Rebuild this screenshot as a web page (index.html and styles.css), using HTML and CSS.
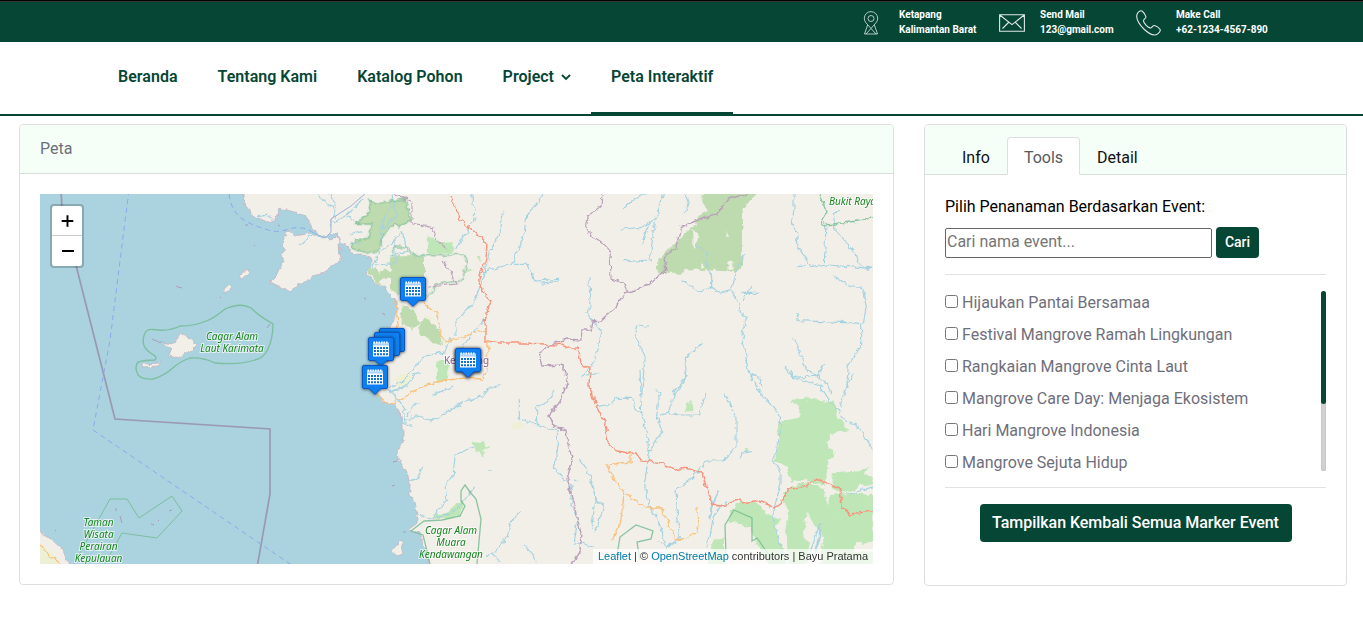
FILE: index.html
```html
<!DOCTYPE html>
<html lang="id">
<head>
<meta charset="utf-8">
<title>Peta Interaktif</title>
<link rel="stylesheet" href="styles.css">
</head>
<body>
<div class="topbar">
  <div class="contact contact-place">
    <svg class="contact-icon" width="16" height="24" viewBox="0 0 16 24"><circle cx="8" cy="7.5" r="3"/><path d="M8 17.500 3 11.800a6.700 6.700 0 1 1 10 0L8 17.500l5 5.500M4.600 14 1.500 23h13l-3.100-9M3 23l5-5.500"/></svg>
    <div>Ketapang<br>Kalimantan Barat</div>
  </div>
  <div class="contact contact-mail">
    <svg class="contact-icon" width="26" height="18" viewBox="0 0 26 18"><path d="M.6.8h24.800v16.400H.6zM.8 1l12.200 9.600L25.200 1M3.500 14.500l6-6M22.500 14.500l-6-6"/></svg>
    <div>Send Mail<br>123@gmail.com</div>
  </div>
  <div class="contact contact-call">
    <svg class="contact-icon" width="26" height="26" viewBox="0 0 26 26"><path d="M2.500 3.200C4 1 6 .2 7.300 1.200c2 1.600 3 3.600 3.600 5.400.5 1.700-2.700 2.700-2.500 4.300.5 2.600 4 6.200 6.700 7 1.800.5 2.300-2.600 4.300-2.400 2 .5 4.400 2 5.600 3.700.9 1.500-.5 3.300-2.300 4.700-3 2.300-8.300.3-13.300-4.400C4.200 14.300.2 7.500 2.500 3.200z"/></svg>
    <div>Make Call<br>+62-1234-4567-890</div>
  </div>
</div>
<nav class="nav">
  <a>Beranda</a>
  <a>Tentang Kami</a>
  <a>Katalog Pohon</a>
  <a>Project <svg class="chevron" width="10" height="7" viewBox="0 0 10 7"><path d="m1 1 4 4 4-4"/></svg></a>
  <a class="active">Peta Interaktif</a>
</nav>
<main class="main">
  <section class="card map-card">
    <div class="card-header">Peta</div>
    <div class="map">
      <svg class="map-tiles" width="833" height="370" viewBox="40 194 833 370">
        <defs>
          <filter id="rough" filterUnits="userSpaceOnUse" x="30" y="184" width="853" height="390" color-interpolation-filters="sRGB">
            <feTurbulence type="fractalNoise" baseFrequency="0.17" numOctaves="2" seed="4"/>
            <feDisplacementMap in="SourceGraphic" scale="6" xChannelSelector="R" yChannelSelector="G"/>
          </filter>
          <filter id="shadow" x="-30%" y="-30%" width="160%" height="160%"><feDropShadow dx="0" dy="0.500" stdDeviation="1.500" flood-color="#000" flood-opacity=".65"/></filter>
          <g id="pin">
            <path d="M2 .5h22a1.500 1.500 0 0 1 1.500 1.500v20a1.500 1.500 0 0 1-1.500 1.500h-5L13 29.300l-6-5.800H2A1.500 1.500 0 0 1 .5 22V2A1.500 1.500 0 0 1 2 .5z" fill="#0c7ff0" stroke="#0a55c0"/>
          </g>
          <g id="calendar-pin">
            <use href="#pin"/>
            <path d="M5 5.500h16v3.500H5z" fill="#a9d0fa"/>
            <path d="M5.500 5.500h15" stroke="#fff" stroke-width="2" stroke-dasharray="1.500 1"/>
            <path d="M5 8.500h16v11H5z" fill="#fff"/>
            <path d="M6 11h14M6 14h14M6 17.200h14" stroke="#0c6fd8" stroke-width="1.900" stroke-dasharray="2 1"/>
          </g>
        </defs>
        <rect x="40" y="194" width="833" height="370" fill="#aad3df"/>
        <g filter="url(#rough)">
          <g class="land">
            <path d="M243 190v6l2 9 5 8 7 5 11 4 7-2 4-12 23 6 6 4 4 10 5 7 8 3 7-5h6l2 10 7 2 2 7 14 4 9 2v7l-6 7 7 8 4 5h8l3 7 5 5 3 5 1 10-7 16-3 17-5 20-9 20 4 9 6 8 12 2 5 9 3 10v19l-5 8 1 10 8 12 3 11v12l5 7 2 10v11l-9 7 12 3 4 14 4 10 2 12h448V190z"/>
            <path d="m288 231 7 5 16-3 9 3 10 3 8-2 3 23-19 13-12 5-13 8-7 5-10-3-10-6 7-7 5-12 2-23z"/>
            <path d="m182 333 8 5 6 7-3 5-8 2-5 6-11-2 2-7-8-7 10 2zM142 364l19-1-3 3-16 1zM240 275l7-6 2 3-5 7-5-1zM222 293l4-5 5-4 2 3-7 6z"/>
            <path d="M36 529l9 7 8 4 9 8 7 18H36zM391 552l10-13 3 15-6 2z"/>
          </g>
          <g class="wood" transform="translate(230 185) scale(.33333)">
            <path d="m415 45 30 10 80-14 18 66-35 20-15-10-35 35-15 50-40 0-40-15 10-20 45-8 5-42-45 2 45-45z"/>
            <path d="M480 214h102v120h-70l-32-20v-35l-28 5 0-25 28-5zM515 360l40 15 10 45-20 12-30-10zM590 400l40 42 6 40-68-32v-35z"/>
            <path d="m408 255 30-8 20 30-15 25-15-30z"/>
          </g>
          <g class="wood" transform="translate(540 185) scale(.33333)">
            <path d="m482 27 170-12-46 65v165l-18 15-145-7-20 10-70 0 2-42 55-50 45-40 20-35 28-20-15-20z"/>
            <path d="m460 135 15 15-10 45-5-10zM560 135l7 22-8-2zM565 230l12 0 0 25-12-4zM485 235l10 15-12-2z" class="hole"/>
          </g>
          <g class="forest" transform="translate(230 185) scale(.33333)">
            <path d="m590 150 50 25 32-5-5 35-72 5zM620 530l35-5v60l-34 8zM742 208l12 10-5 12zM712 250l18 5-18 8z"/>
          </g>
          <g class="forest" transform="translate(590 370) scale(.33333)">
            <path d="M600 90L650 85L735 95L740 140L775 180L720 192L712 235L735 245L712 275L708 350L640 330L603 335L590 290L555 270L570 205L560 180L580 150L625 148L630 110Z"/>
            <path d="M418 425L450 395L505 400L530 430L570 450L555 475L585 545L600 600L540 600L510 540L480 475L430 455L417 460Z"/>
            <path d="M350 580L370 508L402 508L402 640L330 640Z"/>
            <path d="M580 365L640 335L700 355L715 410L740 440L800 430L850 395V515L795 520V545L850 545V600H690L700 500L650 430L640 500L660 520L640 600L600 600L585 480L600 420L578 400Z"/>
            <path d="M728 310L795 305L835 292L822 315L850 320V340L800 350L780 365L728 362Z"/>
            <path d="M718 372L780 370L850 375V395L800 432L740 440L714 410Z"/>
            <path d="M285 98l22-2 0 32-20-5zM458 235l20 0-5 14z"/>
          </g>
          <g class="forest" transform="translate(300 370) scale(.33333)">
            <path d="M400 430l40 3 30-35 22-5-10 45-80 12zM515 212l35 5 18 20-40 10zM528 240l30 5-8 12z"/>
          </g>
          <path class="scrub" d="M393 380l8-7 10 2-4 12-9 1zM512 423l10 0 3 5-12 1zM424 312l12 10-9-2zM40 543l12 9 8 12H40z"/>
          <g class="river" transform="translate(230 185) scale(.33333)">
            <path d="M75 108l10-14 25-3 20 12M265 27l25 30 20 10 10 35M300 27l20 45-20 50M310 115l40-25 50-45M210 180l35-30M350 95l40 20M358 150l40-10M365 175l30 0M725 27l10 75-60 90M820 80l-12 75-30 45-15 70-30 80-55 60 0 40M940 27l-50 70-10 60-35 80-95 25M845 238l50 0 20 50 75-5M485 27l15 65-45 40 0 55-30 65M495 45l-35 55-10 70M455 200l65-60 10 60-50 10M435 240l60-5 0-80M660 460l-15 40-65 15-55 70-45 25M770 395l-45 55-45 55M480 620l60-20"/>
          </g>
          <g class="river" transform="translate(540 185) scale(.33333)">
            <path d="M248 72l35-30 37-15M370 27l-20 70-45 30-60 5M345 95l-15 130-80 5M325 120l-20 55M435 27l10 25-10 35M0 295l50-5M147 275l3 90-10 20 45 55-20 90-40 45M140 570l35-5M285 440l5-20 38 3M285 440l30 80-10 110M488 472l-55 50 8 50-40 50M425 288l50 30 40-10 25 16 35-8 20 35 8 40 18 5-15 50 20 120 30 10 10 30M470 185l30 15 0 50 15 25 0 35M615 208l-25 50-15 55M635 300l-25 45M605 325h50M762 27v45l-8 40 15 25 5 50 40 55M858 115l-5 120M810 248l50-8 70 5 60 5M770 244h30M900 80l-20 5 5 50 60 70 15 35 40 12M880 272l40 25 50 15 10 45-10 60M770 385l5 22 190 8 0 65-40 60-5 70M762 460l35 90 60 40 15 35M735 548l25 30 75-8 20-35"/>
          </g>
          <g class="river" transform="translate(300 370) scale(.33333)">
            <path d="M250 55l30 15 30 45 5 45M275 65l50-25 20-30 20-5M315 150l45-12 35 15 50-30 55-30 50-18 15-20 40-10M320 140l15-30 20-10M310 160l30 10M400 75l60-28M658 85l0 65 50 12 60 20 5 50-10 65 50 50 0 60 20 40-10 70 60 15M765 60l-20 35-35 15v50M520 230l-55 25-5 60-25 30 5 45-45 55M368 288l-15 35-25 10M350 430l35 18 65-15 45-45 30-38M662 425l-30 30-10 45-40 50-20 10M580 555l25 20M675 525l25 30 5 25M838 270l35 50 15 70-15 90M565 300l12 5M820 330l12 2"/>
          </g>
          <g class="river" transform="translate(590 370) scale(.33333)">
            <path d="M150 0l5 130 15 60 8 60-15 90 15 70 35 60 10 50M290 0l-5 30-35 50-15 50M20 110l30-5 30-20 45 0 10 30 20 15M200 60l10 5-10 70 15 50-40 65M350 65l-25 70-60 0-30-5-25 5M403 68l35 75 0 90-40 40-50 0-40 50M475 0l30 60 60 70 8 40-15 80-10 15 25 45 0 30-25 90 10 50 20 70 10 30M600 0l10 25 80 20 30 50 30 30 5 20 45 20 50 75M790 5l-25 65-15 40M308 322l-50 40 5 80 5 60-40 30M410 390l-40 50-10 60-10 30M690 460l-20 60-25 60M850 350l-70 22M450 265l5-15 30-5M0 330l20 60 20 20-25 80M205 515l30 15 40-25"/>
          </g>
          <path class="inlet" d="M309 231l8 4 7 3 5-1M709 520l5-20 5-10M814 555l6-20 0-8"/>
          <g class="reserve">
            <g transform="translate(230 185) scale(.33333)"><path d="M415 45l30 10 80-14 18 66-35 20-15-10-35 35-15 50-40 0-40-15 10-20 45-8 5-42-45 2 45-45zM485 210l10-28 35 5 20 25 85 0 65-5 12 20-15 60-75 10-30 40"/></g>
            <path d="M819 194l7 18-5 11 5 2 40-5 8-5"/>
          </g>
          <g class="border">
            <path d="M394 194l18 8 0 21 21 5 4 12 10 11M443 260l14 24-29 3M602 194l-1 12-13 10-2 16 17 11 7 8 1 28 12 4 4 9"/>
            <path d="M750 194l-22 5-10 14-20 7-17 7-5 20-12 12 2 10-17 15-23 9-11 15-15 13-7 1-2 8-9 0-1 10-14-1-14 5-15 10 4 12 21-1 4 18-8 20-10 12 5 12 12 3 2 15 5 15-6 18 14 55-1 19-11 17-22 7" stroke-width="1.400"/>
          </g>
        </g>
        <g filter="url(#rough)">
          <g class="trunk">
            <path d="M450 194l10 25 27 24-1 15-8 25 12 18-5 20 0 20 15 2 25 0 20 1 8 2 7-2 8 4 10 0 3 16 9 4-1 18 7 20 9 17 3 20 9 8 20 3 4 6 22 3 12 7 11-2 16 5 10 32 10 1 18-7 3 5 16-3 10 4 5 3 7-5 7-14 15-1 13-9 24 10 2 18 8 7 23-3 14-12"/>
          </g>
          <g class="road">
            <path d="M396 300l2 25-10 15M424 303l13 10 4 24 5 5 38-12M488 340l-1 30-4 9-20-1-33 5-30 16-12 5-12-10M630 452v10l-8 1-16 2 12 20 6 9-3 25-9 22M626 494l20 14 15 0 15 32 13-2 9-10-1-22M40 545l10 10 12 10"/>
          </g>
        </g>
        <g class="reserve">
          <path d="M145 333Q147 329 153 329.500Q168 332 180 326Q195 326 206 321Q213 319 225 309Q241 302 251 308Q259 316 273 324Q273 338 268 349Q264 358 255 360Q240 365 215 363Q203 357 190 358Q181 361 174 367Q164 376 153 379Q143 380 138 375Q134 367 138 362Q145 360 155 360Q158 357 152 354Q139 346 145 333Z"/>
          <path d="M76 560l34-61h17l12 19 33-22 10 15-25 27-35-5-19 34" class="reserve-thin"/>
          <path d="M477 564l4-45-5-20-6-7-5-7-4 6 0 10 4 5-5 10-18 4-18 1-13 10 12 4 3 12 4 17M617 555l3-18 16-12 17 6-2 8-14 3 3 18M726 555l-1-30 9-15 18 8 0 23 5-3 12 17"/>
        </g>
        <path class="maritime" d="M61 190l1 20 53 209 155 10v65l-13 74"/>
        <path class="ferry" d="M129 190l-19 150-17 90 200 136M229 194c3 26 22 30 36 35 22 8 25-8 46 2"/>
        <path class="ferry strait" d="M310 231l8 4 7 3 6-6 0-13 20-13 23-20"/>
        <g class="rocks"><path d="M245 225h3M278 225l2 1M254 245l1 1M176 286l2 1 4 1M220 297l1 1M203 359l1 1M270 324l-3 4M152 339l2 1 3 1 3 2 2-2M364 298l2 1M382 313l3 2M393 462l4-1M392 486l3-1M403 532l3 0M116 508l0 3M120 516l2 7M151 524l3 1M158 520l1 1M169 511l3-1M55 530l1 1"/></g>
        <g class="park-label">
          <text x="232" y="340">Cagar Alam</text><text x="232" y="352">Laut Karimata</text>
          <text x="98.500" y="526">Taman</text><text x="98.500" y="538">Wisata</text><text x="98.500" y="550">Perairan</text><text x="98.500" y="562">Kepulauan</text>
          <text x="451" y="534">Cagar Alam</text><text x="451" y="546">Muara</text><text x="451" y="558">Kendawangan</text>
          <text class="label-start" x="829" y="205">Bukit Raya</text>
        </g>
        <text class="city-label" x="466.500" y="363.500">Ketapang</text>
        <g filter="url(#shadow)"><use href="#calendar-pin" x="400" y="277"/></g>
        <g filter="url(#shadow)"><use href="#pin" x="379" y="328"/></g>
        <g filter="url(#shadow)"><use href="#pin" x="374" y="332"/></g>
        <g filter="url(#shadow)"><use href="#calendar-pin" x="368" y="337"/></g>
        <g filter="url(#shadow)"><use href="#calendar-pin" x="362" y="365"/></g>
        <g filter="url(#shadow)"><g filter="url(#shadow)"><use href="#calendar-pin" x="455" y="348"/></g></g>
      </svg>
      <div class="zoom">
        <svg width="30" height="30" viewBox="0 0 30 30"><path d="M9.500 15.500h12M15.500 9.500v12"/></svg>
        <svg width="30" height="30" viewBox="0 0 30 30"><path d="M10 15h12"/></svg>
      </div>
      <div class="attribution"><a>Leaflet</a> | © <a>OpenStreetMap</a> contributors | Bayu Pratama</div>
    </div>
  </section>
  <section class="card tools-card">
    <div class="tabs"><span class="tab">Info</span><span class="tab tab-active">Tools</span><span class="tab">Detail</span></div>
    <div class="tools">
      <label class="tools-label">Pilih Penanaman Berdasarkan Event:</label>
      <div class="search"><input class="search-input" type="text" placeholder="Cari nama event..."><button class="btn btn-small">Cari</button></div>
      <div class="events">
        <div class="event-list">
          <label><input type="checkbox">Hijaukan Pantai Bersamaa</label>
          <label><input type="checkbox">Festival Mangrove Ramah Lingkungan</label>
          <label><input type="checkbox">Rangkaian Mangrove Cinta Laut</label>
          <label><input type="checkbox">Mangrove Care Day: Menjaga Ekosistem</label>
          <label><input type="checkbox">Hari Mangrove Indonesia</label>
          <label><input type="checkbox">Mangrove Sejuta Hidup</label>
        </div>
        <div class="scrollbar"><div class="scroll-thumb"></div></div>
      </div>
      <button class="btn btn-reset">Tampilkan Kembali Semua Marker Event</button>
    </div>
  </section>
</main>
</body>
</html>
```
FILE: styles.css
```css
* { box-sizing: border-box; }
body { margin: 0; height: 619px; overflow: hidden; background: #fff; color: #6f6f7b; font: 16px/24px Roboto, sans-serif; }
.topbar { display: flex; height: 42px; padding: 6px 0 0 863px; border-top: 1px solid #000; background: #064635; color: #fff; font-size: 10px; line-height: 15px; font-weight: 700; box-shadow: inset 0 1px #33332f; }
.contact { display: flex; gap: 20px; white-space: nowrap; }
.contact-place { width: 136px; }
.contact-mail { width: 136px; gap: 15px; }
.contact-call { gap: 15px; }
.contact-icon { flex: none; fill: none; stroke: #dfe9e5; stroke-width: 1.100; }
.contact-place .contact-icon { margin-top: 4px; stroke-width: .8; }
.contact-mail .contact-icon { margin-top: 7px; }
.contact-call .contact-icon { margin-top: 3px; }
.nav { display: flex; height: 74px; padding-left: 98px; border-bottom: 2px solid #064635; }
.nav a { height: 73px; padding: 23px 20px 0; color: #064635; font-weight: 600; font-size: 16px; letter-spacing: .02px; white-space: nowrap; }
.nav .active { border-bottom: 3px solid #064635; }
.chevron { margin-left: 3px; vertical-align: 1px; fill: none; stroke: #064635; stroke-width: 1.800; }
.main { display: flex; gap: 30px; align-items: flex-start; padding: 8px 0 0 19px; }
.card { border: 1px solid #dfdfdf; border-radius: 4px; background: #fff; overflow: hidden; }
.map-card { width: 875px; height: 461px; }
.card-header { height: 49px; padding: 12px 20px; border-bottom: 1px solid #d6dfd8; background: #f5fff8; }
.map { position: relative; width: 833px; height: 370px; margin: 20px; overflow: hidden; }
.map-tiles { display: block; }
.land { fill: #f2efe9; stroke: #c6aebd; stroke-width: .7; }
.wood { fill: #bedbb0; }
.wood .hole { fill: #f2efe9; }
.forest { fill: #bfe6b6; }
.scrub { fill: #eef0d5; }
.river { fill: none; stroke: #a5d2e0; stroke-width: 3.500; stroke-linejoin: round; }
.inlet { fill: none; stroke: #aad3df; stroke-width: 2.400; }
.reserve { fill: none; stroke: #71b98d; stroke-width: 1.300; opacity: .8; }
.reserve g { stroke-width: 3.500; }
.reserve-thin { stroke-width: 1; }
.border { fill: none; stroke: #b9a0b9; stroke-width: 1.100; }
.trunk { fill: none; stroke: #f6947d; stroke-width: 1.400; }
.road { fill: none; stroke: #f8c27c; stroke-width: 1.300; }
.maritime { fill: none; stroke: #9b98b3; stroke-width: 1.700; }
.ferry { fill: none; stroke: #8ba8ec; stroke-width: 1; stroke-dasharray: 5 4; }
.strait { stroke-dasharray: none; stroke: #a2aed8; }
.rocks { fill: none; stroke: #aa9bb8; stroke-width: 1; }
.park-label { fill: #17851f; stroke: rgba(255,255,255,.65); stroke-width: 2; paint-order: stroke; font: italic 10px "Noto Sans", sans-serif; text-anchor: middle; }
.label-start { text-anchor: start; }
.city-label { fill: #85648c; stroke: rgba(255,255,255,.7); stroke-width: 2; paint-order: stroke; font: 10px "Noto Sans", sans-serif; text-anchor: middle; }
.zoom { position: absolute; left: 10px; top: 10px; width: 34px; height: 64px; border: 2px solid rgba(0,0,0,.2); border-radius: 4px; background: #fff; background-clip: padding-box; }
.zoom svg { display: block; fill: none; stroke: #000; stroke-width: 2; }
.zoom svg:first-child { border-bottom: 1px solid #ccc; }
.attribution { position: absolute; right: 0; bottom: 0; height: 15px; padding: 0 5px; background: rgba(255,255,255,.72); color: #333; font: 11px/15px "Liberation Sans", Arial, sans-serif; white-space: nowrap; }
.attribution a { color: #0078a8; }
.tools-card { width: 423px; height: 462px; }
.tabs { display: flex; height: 50px; padding: 12px 20px 0; border-bottom: 1px solid #d6dfd8; background: #f5fff8; color: #111; }
.tab { height: 38px; padding: 9px 17px 0; }
.tab-active { border: 1px solid #dfdfdf; border-bottom-color: #fff; border-radius: 4px 4px 0 0; background: #fff; color: #555b60; padding: 8px 16px 0; }
.tools { padding: 20px 20px 0; }
.tools-label { display: block; color: #000; }
.search { display: flex; gap: 4px; height: 47px; padding-top: 8px; }
.search-input { width: 267px; height: 30px; margin-top: 1px; padding: 0 1px 3px; border: 1px solid #666; border-radius: 2px; font: 16px Roboto, sans-serif; }
.search-input::placeholder { color: #757575; }
.btn { border: 0; border-radius: 4px; background: #064635; color: #fff; font-family: Roboto, sans-serif; }
.btn-small { width: 43px; height: 31px; padding: 0 0 1px; font-size: 14px; font-weight: 500; }
.events { display: flex; justify-content: space-between; height: 214px; margin-top: 8px; padding: 16px 0; border-top: 1px solid #e2e2e2; border-bottom: 1px solid #e2e2e2; }
.event-list { display: flex; flex-direction: column; gap: 8px; height: 180px; overflow: hidden; }
.event-list label { display: flex; flex: none; gap: 4px; height: 24px; white-space: nowrap; }
.event-list input { width: 13px; height: 13px; margin: 4px 0 0; }
.scrollbar { width: 5px; height: 180px; border-radius: 3px; background: #d2d2d2; box-shadow: inset 0 0 2px #aaa; }
.scroll-thumb { height: 113px; border-radius: 3px; background: #064635; }
.btn-reset { display: block; width: 312px; height: 38px; margin: 16px auto 0; padding: 0 0 2px; font-size: 16px; font-weight: 500; letter-spacing: -.04px; }
```
